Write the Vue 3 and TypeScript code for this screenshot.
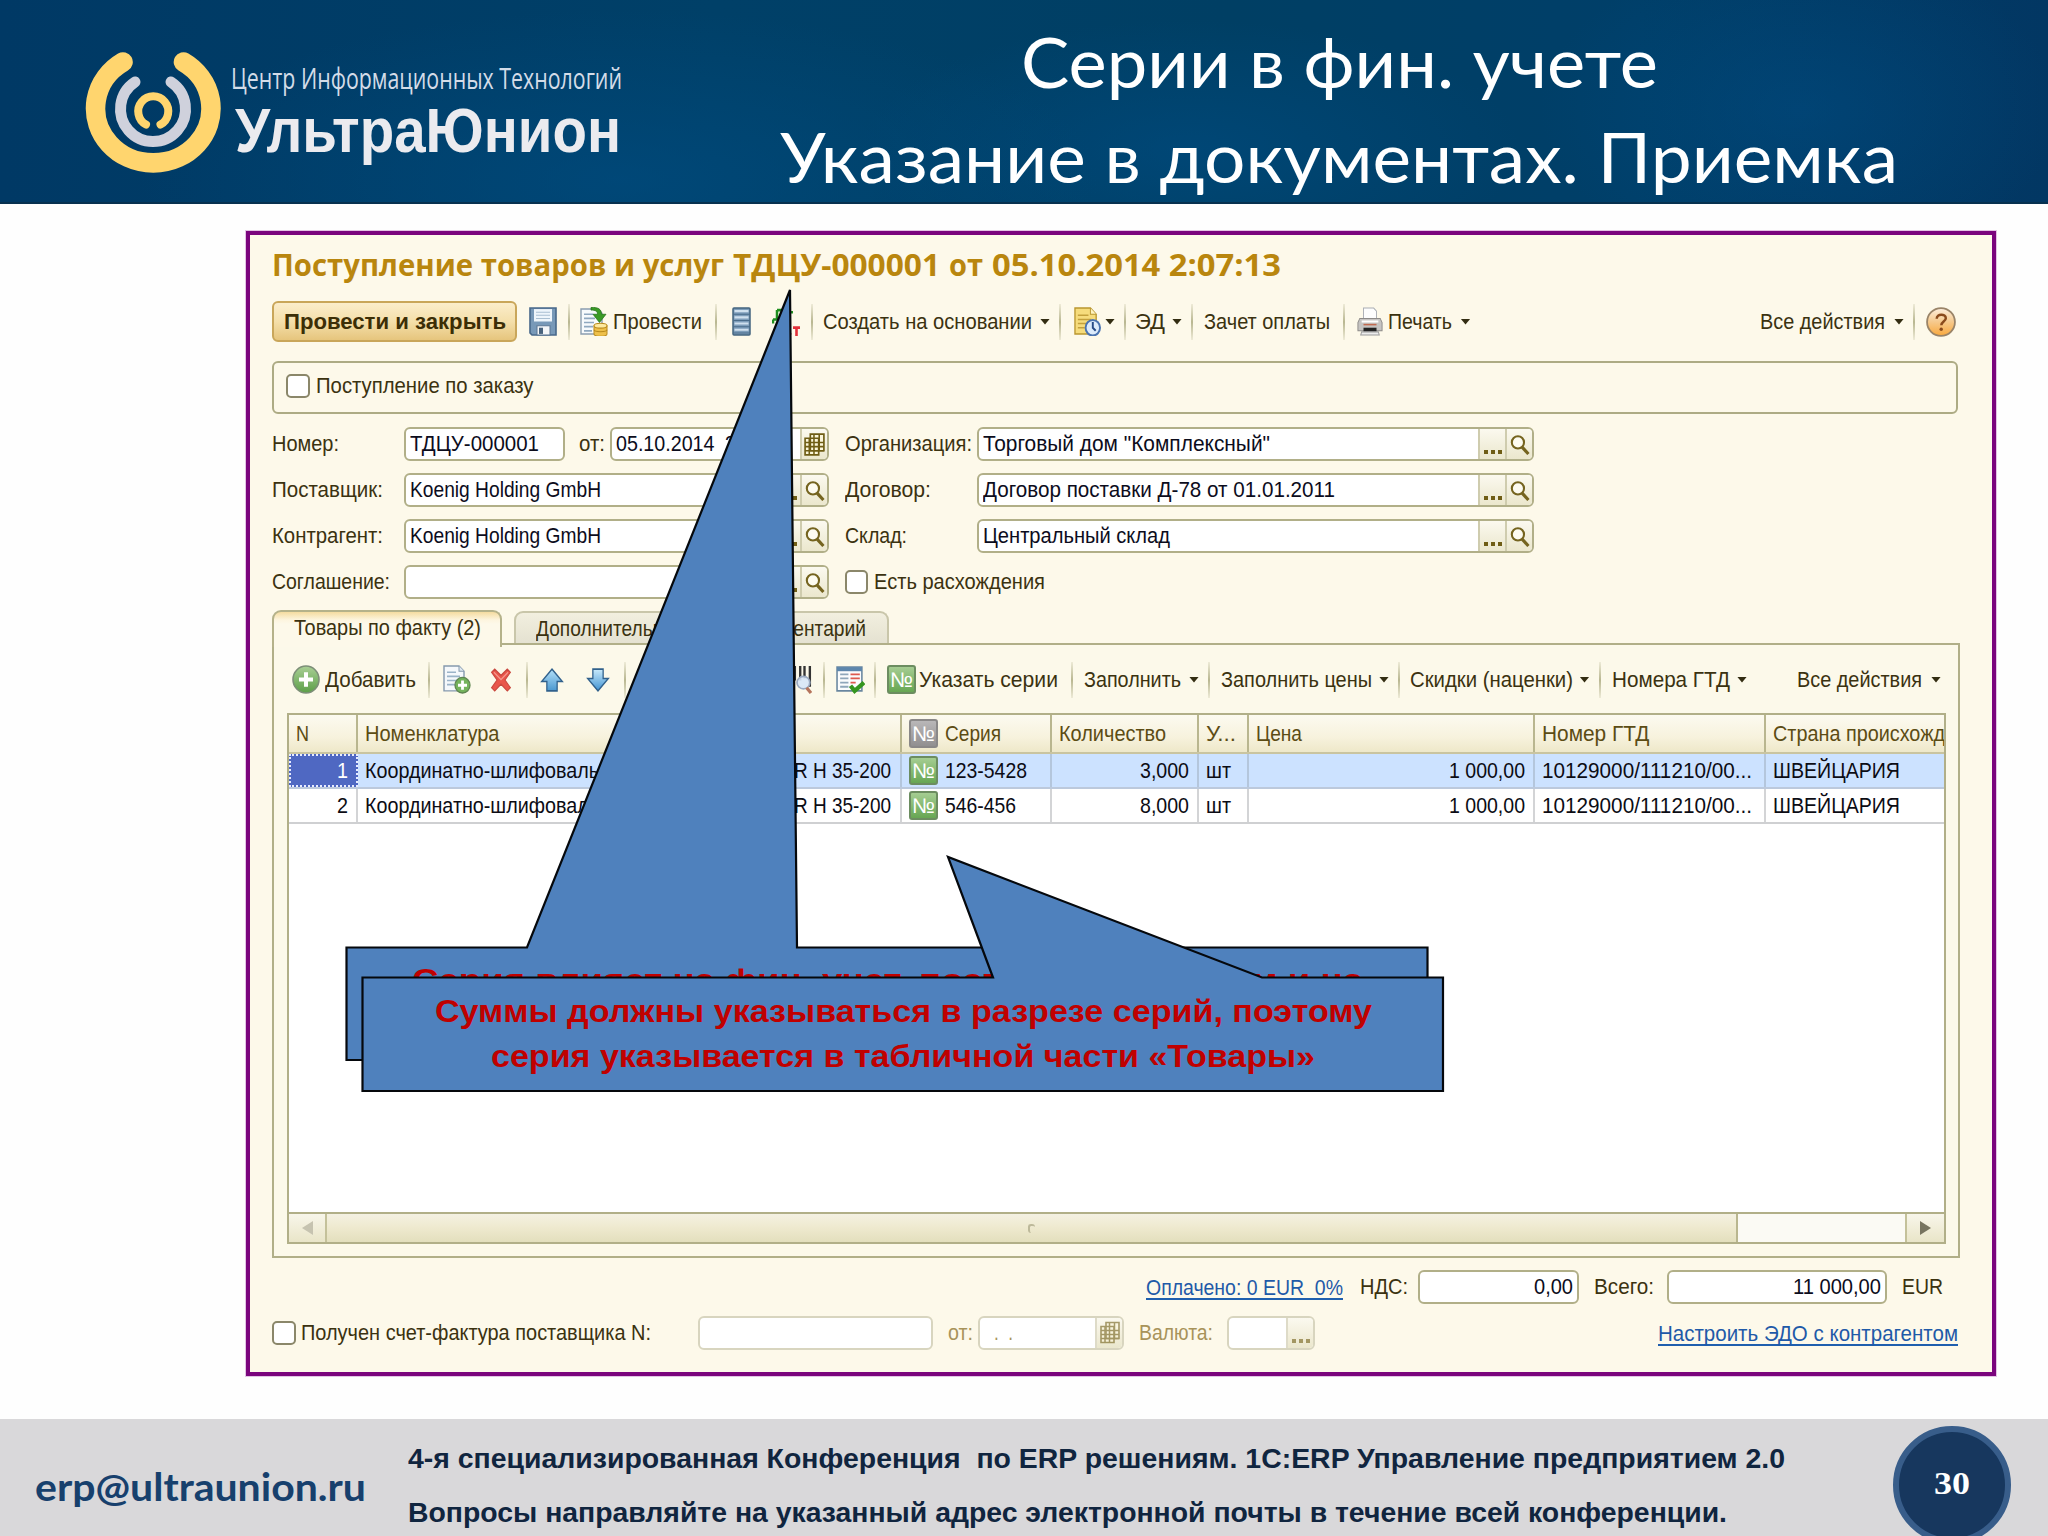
<script setup lang="ts">
import type { Directive } from 'vue'

// Stretches or condenses a single line of text to the given width.
const vFit: Directive<HTMLElement, number> = {
  mounted(el, binding) {
    const natural = el.getBoundingClientRect().width
    el.style.width = `${binding.value}px`
    el.style.transform = `scaleX(${binding.value / natural})`
  },
}

interface Item {
  k: 'text' | 'icon' | 'sep' | 'arrow'
  ml: number
  t?: string
  w?: number
}

const text = (t: string, w: number, ml = 11): Item => ({ k: 'text', t, w, ml })
const icon = (t: string, w: number, ml = 11): Item => ({ k: 'icon', t, w, ml })
const sep = (ml = 12): Item => ({ k: 'sep', ml })
const arrow = (ml = 8): Item => ({ k: 'arrow', ml })

const mainBar: Item[] = [
  icon('save', 28, 11.5), sep(11),
  icon('post', 28, 10.5), text('Провести', 89, 5), sep(12.5),
  icon('list', 19, 15.5), icon('dtkt', 28, 21), sep(11),
  text('Создать на основании', 209, 10), arrow(8), sep(9),
  icon('docclock', 27, 13), arrow(4), sep(9),
  text('ЭД', 30, 9), arrow(7), sep(9),
  text('Зачет оплаты', 126, 11), sep(12.5),
  icon('print', 26, 12.5), text('Печать', 64, 4.5), arrow(9),
]

const goodsBar: Item[] = [
  icon('add', 28, 0), text('Добавить', 91, 5), sep(12),
  icon('copy', 28, 13), icon('del', 22, 18.5), sep(14),
  icon('up', 24, 12.5), icon('down', 24, 21.5), sep(14),
  icon('barcode', 30, 156), sep(11),
  icon('check', 29, 11), sep(9.5),
  icon('num', 29, 11), text('Указать серии', 139, 3), sep(12.5),
  text('Заполнить', 97), arrow(8.5), sep(9),
  text('Заполнить цены', 151, 10.5), arrow(7.5), sep(9),
  text('Скидки (наценки)', 163, 9.5), arrow(7), sep(9),
  text('Номера ГТД', 118, 11), arrow(7.5),
]

const pic: Record<string, string> = {
  save: '<path d="M1 1h26v26H3l-2-2z" fill="#7899b8" stroke="#48688a" stroke-width="1.6"/><path d="M5 2h18v12H5z" fill="#eef5fb"/><path d="M7 5h14M7 8h14M7 11h14" stroke="#a9bfd2"/><path d="M8 18h13v9H8z" fill="#f4f6f8" stroke="#587592"/><path d="M10 20h4v6h-4z" fill="#49637d"/>',
  post: '<path d="M1 2h17l4 4v20H1z" fill="#f7fafc" stroke="#8a9db0" stroke-width="1.4"/><path d="M4 7h9M4 11h11M4 15h10M4 19h9M4 23h8" stroke="#8fa8bf" stroke-width="1.6"/><path d="M11 .5c7-.5 10.500 1.500 10.500 6.500H26l-6.500 8L13 7h4.500c0-3-2-4-6.500-4z" fill="#3a9b25" stroke="#1f6e14" stroke-width=".7"/><path d="M14 18v8c0 3 13 3 13 0v-8z" fill="#eec04a" stroke="#b98a1c"/><ellipse cx="20.5" cy="18" rx="6.5" ry="2.4" fill="#fde9a0" stroke="#b98a1c"/><path d="M14 22c0 2.500 13 2.500 13 0" fill="none" stroke="#b98a1c"/>',
  list: '<rect x="1" y="1" width="17" height="26" rx="1" fill="#7d9dba" stroke="#43647f" stroke-width="1.500"/><path d="M2.500 4h14M2.500 10h14M2.500 16h14M2.500 22h14" stroke="#cfe0ee" stroke-width="2"/><path d="M1 7h17M1 13h17M1 19h17M1 25h17" stroke="#4a6c8a"/>',
  dtkt: '<path d="M5 3h8v8M5 3v8M1 12h14M1 12v4" stroke="#1f8f1f" stroke-width="2.500" fill="none"/><path d="M13 5h8M17 5v5" stroke="#1f8f1f" stroke-width="2.500"/><path d="M12 18v9M18 17l-6 5 7 5M21 20h7M24.500 20v8" stroke="#e2303a" stroke-width="2.600" fill="none"/>',
  docclock: '<path d="M1 1h16l6 6v19H1z" fill="#f6dc7c" stroke="#b9962f" stroke-width="1.400"/><path d="M17 1v6h6" fill="#fff3bf" stroke="#b9962f"/><path d="M4 8h11M4 12h14M4 16h9M4 20h7" stroke="#c4a13c" stroke-width="1.400"/><circle cx="19.500" cy="20" r="7.500" fill="#dcebfb" stroke="#4a73b0" stroke-width="2"/><path d="M19.500 14.500V20l3 3" stroke="#274b86" stroke-width="2" fill="none"/>',
  print: '<path d="M7 1h11l3 3v9H7z" fill="#fdfdfd" stroke="#a9adb3"/><path d="M3 11h22l2 4v8H1v-8z" fill="#c6c4c2" stroke="#8c8a88"/><path d="M5 14h18" stroke="#fff" stroke-width="2"/><path d="M7 17h14" stroke="#c26a50" stroke-width="1.500"/><path d="M7 20h14v4H7z" fill="#222"/><path d="M5 24h18l1 3H4z" fill="#ececec" stroke="#9a9a9a"/>',
  help: '<defs><linearGradient id="hg" x1="0" y1="0" x2="0" y2="1"><stop offset="0" stop-color="#fdeedd"/><stop offset=".5" stop-color="#f6c98c"/><stop offset="1" stop-color="#f9a83c"/></linearGradient></defs><circle cx="14" cy="14" r="13" fill="url(#hg)" stroke="#9a8468" stroke-width="1.700"/><path d="M10 11c0-5 8.500-5 8.500-.5 0 3-4.200 3.200-4.200 6.500" fill="none" stroke="#8a4a1c" stroke-width="2.300"/><circle cx="14.200" cy="20.800" r="1.600" fill="#8a4a1c"/>',
  add: '<defs><linearGradient id="ag" x1="0" y1="0" x2="0" y2="1"><stop offset="0" stop-color="#a9cf95"/><stop offset="1" stop-color="#5c9f48"/></linearGradient></defs><circle cx="14" cy="14" r="13" fill="url(#ag)" stroke="#7d8f78" stroke-width="1.600"/><path d="M14 7v14M7 14h14" stroke="#fff" stroke-width="4"/>',
  copy: '<path d="M1 1h15l5 5v19H1z" fill="#f5f8fb" stroke="#8599ad" stroke-width="1.400"/><path d="M16 1v5h5" fill="#dfe8f0" stroke="#8599ad"/><path d="M4 7h9M4 11h13M4 15h10M4 19h8" stroke="#9bb3c8" stroke-width="1.600"/><circle cx="19.500" cy="19.500" r="7.500" fill="#74b35c" stroke="#5f8551" stroke-width="1.300"/><path d="M19.500 15v9M15 19.500h9" stroke="#fff" stroke-width="2.800"/>',
  del: '<path d="M2 7l4-3 8 6 8-6 4 3-7 7.500 7 7.500-4 3-8-6.500L6 25l-4-3 7-7.500z" fill="#e9564b" stroke="#c9483f" stroke-width="1.200"/><path d="M5 7l9 7 9-7" stroke="#f59a8e" stroke-width="1.500" fill="none"/>',
  up: '<defs><linearGradient id="ug" x1="0" y1="0" x2="0" y2="1"><stop offset="0" stop-color="#b6e2fa"/><stop offset="1" stop-color="#4a97cf"/></linearGradient></defs><path d="M14 4l12 12h-6v9H8v-9H2z" fill="url(#ug)" stroke="#31618c" stroke-width="1.500"/>',
  down: '<defs><linearGradient id="dg" x1="0" y1="0" x2="0" y2="1"><stop offset="0" stop-color="#c9eafb"/><stop offset="1" stop-color="#3f92d2"/></linearGradient></defs><path d="M14 25L2 13h6V4h12v9h6z" fill="url(#dg)" stroke="#31618c" stroke-width="1.500"/>',
  barcode: '<path d="M2 1v20M6 1v20M12 1v14M17 1v14M21 1v12M26 1v20" stroke="#333" stroke-width="2.200"/><circle cx="20" cy="17" r="6" fill="#d7e6f7" fill-opacity=".9" stroke="#9aa9c0" stroke-width="1.600"/><path d="M23 22l4 5" stroke="#b5745c" stroke-width="3"/>',
  check: '<path d="M1 2h24v23H1z" fill="#fbfcfd" stroke="#69869f" stroke-width="1.500"/><path d="M1 2h24v4H1z" fill="#5d86ac"/><path d="M4 9h8M4 13h8M4 17h8M4 21h8" stroke="#8fa6ba" stroke-width="1.700"/><path d="M14 9h9M14 13h9M14 17h5" stroke="#dd5a4f" stroke-width="1.700"/><path d="M14 20l4 5 9-8" fill="none" stroke="#35951f" stroke-width="4"/>',
  mag: '<circle cx="8.500" cy="8" r="5.800" fill="#fdfbf0" stroke="#75641f" stroke-width="2"/><path d="M12.500 12.500l6 6.500" stroke="#75641f" stroke-width="3"/>',
  cal: '<path d="M6 1h13v16H6z M1 5h13v16H1z" fill="#fbf6da" stroke="#6f5d15" stroke-width="1.600"/><path d="M1 9h18M1 13h18M1 17h18M5 5v16M9.500 1v20M14.500 1v16" stroke="#6f5d15" stroke-width="1.500"/>',
}

interface Column { title: string; w: number; tw: number; num?: boolean }
const columns: Column[] = [
  { title: 'N', w: 69, tw: 13 },
  { title: 'Номенклатура', w: 543.5, tw: 134.5 },
  { title: 'Серия', w: 150.5, tw: 56, num: true },
  { title: 'Количество', w: 147, tw: 107 },
  { title: 'У...', w: 49.5, tw: 30 },
  { title: 'Цена', w: 286, tw: 46 },
  { title: 'Номер ГТД', w: 231, tw: 107.5 },
  { title: 'Страна происхожд', w: 180, tw: 172 },
]
const rows = [
  { n: '1', serie: '123-5428', sw: 82, qty: '3,000' },
  { n: '2', serie: '546-456', sw: 71, qty: '8,000' },
]

const left = [
  { label: 'Поставщик:', lw: 111, value: 'Koenig Holding GmbH', vw: 191 },
  { label: 'Контрагент:', lw: 111, value: 'Koenig Holding GmbH', vw: 191 },
  { label: 'Соглашение:', lw: 118, value: '', vw: 0 },
]
const right = [
  { label: 'Организация:', lw: 127, value: 'Торговый дом "Комплексный"', vw: 287 },
  { label: 'Договор:', lw: 86, value: 'Договор поставки Д-78 от 01.01.2011', vw: 352 },
  { label: 'Склад:', lw: 62, value: 'Центральный склад', vw: 187 },
]
</script>

<template>
  <div class="slide">
    <header class="head">
      <div class="logo">
        <svg class="emblem" width="140" height="126" viewBox="84 50 140 126" fill="none" stroke-linecap="round">
          <path d="M123 62A57.700 54.500 0 1 0 183.500 62" stroke="#ffd56e" stroke-width="19.600" />
          <path d="M135 82A32.500 32.500 0 1 0 171 82" stroke="#cfd1dc" stroke-width="11" />
          <path d="M146 124.500A15 15 0 1 1 160.500 124.500" stroke="#ffd56e" stroke-width="8" />
        </svg>
        <div class="brand">
          <div class="l1"><span v-fit="391" class="t">Центр Информационных Технологий</span></div>
          <div class="l2"><span v-fit="386" class="t">УльтраЮнион</span></div>
        </div>
      </div>
      <h1 class="title">
        <span v-fit="637" class="t">Серии в фин. учете</span>
        <span v-fit="1118" class="t">Указание в документах. Приемка</span>
      </h1>
    </header>

    <main class="form">
      <div class="form-title">
        <span v-fit="452" class="t">Поступление товаров и услуг</span>
        <span v-fit="207" class="t">ТДЦУ-000001</span>
        <span v-fit="34" class="t">от</span>
        <span v-fit="289" class="t">05.10.2014 2:07:13</span>
      </div>

      <div class="bar main-bar">
        <div class="primary"><span v-fit="222" class="t">Провести и закрыть</span></div>
        <template v-for="(it, i) in mainBar" :key="i">
          <span v-if="it.k === 'text'" class="slot" :style="{ marginLeft: it.ml + 'px' }"><span v-fit="it.w!" class="t">{{ it.t }}</span></span>
          <svg v-else-if="it.k === 'icon'" :width="it.w" height="29" :viewBox="it.t === 'list' ? '0 0 19 28' : '0 0 28 28'" preserveAspectRatio="none" :style="{ marginLeft: it.ml + 'px' }" v-html="pic[it.t!]" />
          <i v-else :class="it.k" :style="{ marginLeft: it.ml + 'px' }"></i>
        </template>
        <span class="slot push"><span v-fit="125" class="t">Все действия</span></span>
        <i class="arrow a8"></i><i class="sep a8"></i>
        <svg class="a11" width="30" height="30" viewBox="0 0 28 28" v-html="pic.help" />
      </div>

      <div class="order">
        <i class="box"></i><span v-fit="217.5" class="t">Поступление по заказу</span>
      </div>

      <div class="fields">
        <div class="col">
          <div class="row">
            <div class="lab"><span v-fit="67" class="t">Номер:</span></div>
            <div class="inp num-inp"><span v-fit="129" class="t">ТДЦУ-000001</span></div>
            <span class="slot from"><span v-fit="26" class="t">от:</span></span>
            <div class="inp grow"><span v-fit="98.500" class="t">05.10.2014</span><span v-fit="60" class="t time">2:07:13</span>
              <div class="btn last"><svg width="21" height="23" viewBox="0 0 20 22" v-html="pic.cal" /></div></div>
          </div>
          <div v-for="f in left" :key="f.label" class="row">
            <div class="lab"><span v-fit="f.lw" class="t">{{ f.label }}</span></div>
            <div class="inp grow"><span v-if="f.value" v-fit="f.vw" class="t">{{ f.value }}</span>
              <div class="btn dots push"><b></b><b></b><b></b></div>
              <div class="btn"><svg width="21" height="21" viewBox="0 0 20 20" v-html="pic.mag" /></div></div>
          </div>
        </div>
        <div class="col right">
          <div v-for="f in right" :key="f.label" class="row">
            <div class="lab"><span v-fit="f.lw" class="t">{{ f.label }}</span></div>
            <div class="inp grow"><span v-fit="f.vw" class="t">{{ f.value }}</span>
              <div class="btn dots push"><b></b><b></b><b></b></div>
              <div class="btn"><svg width="21" height="21" viewBox="0 0 20 20" v-html="pic.mag" /></div></div>
          </div>
          <div class="row"><i class="box"></i><span v-fit="171" class="t diff">Есть расхождения</span></div>
        </div>
      </div>

      <div class="tabs">
        <div class="tab on"><span v-fit="187" class="t">Товары по факту (2)</span></div>
        <div class="tab off"><span v-fit="138" class="t">Дополнительно</span></div>
        <div class="tab off second"><span v-fit="121" class="t">Комментарий</span></div>
      </div>

      <section class="sheet">
        <div class="bar goods-bar">
          <template v-for="(it, i) in goodsBar" :key="i">
            <span v-if="it.k === 'text'" class="slot" :style="{ marginLeft: it.ml + 'px' }"><span v-fit="it.w!" class="t">{{ it.t }}</span></span>
            <span v-else-if="it.t === 'num'" class="no" :style="{ marginLeft: it.ml + 'px' }"><span v-fit="23" class="t">№</span></span>
            <svg v-else-if="it.k === 'icon'" :width="it.w" height="29" viewBox="0 0 28 28" preserveAspectRatio="none" :style="{ marginLeft: it.ml + 'px' }" v-html="pic[it.t!]" />
            <i v-else :class="it.k" :style="{ marginLeft: it.ml + 'px' }"></i>
          </template>
          <span class="slot push"><span v-fit="125" class="t">Все действия</span></span>
          <i class="arrow a8"></i>
        </div>

        <div class="table">
          <div class="tr th">
            <div v-for="c in columns" :key="c.title" class="td" :style="{ width: c.w + 'px' }">
              <span v-if="c.num" class="no gray"><span v-fit="23" class="t">№</span></span>
              <span v-fit="c.tw" class="t">{{ c.title }}</span>
            </div>
          </div>
          <div v-for="(r, i) in rows" :key="r.n" class="tr" :class="{ sel: i === 0 }">
            <div class="td end first" :style="{ width: columns[0].w + 'px' }"><span v-fit="11" class="t">{{ r.n }}</span></div>
            <div class="td" :style="{ width: columns[1].w + 'px' }">
              <span v-fit="270" class="t">Координатно-шлифовальный</span><span v-fit="97" class="t push">R H 35-200</span>
            </div>
            <div class="td" :style="{ width: columns[2].w + 'px' }"><span class="no"><span v-fit="23" class="t">№</span></span><span v-fit="r.sw" class="t">{{ r.serie }}</span></div>
            <div class="td end" :style="{ width: columns[3].w + 'px' }"><span v-fit="49" class="t">{{ r.qty }}</span></div>
            <div class="td" :style="{ width: columns[4].w + 'px' }"><span v-fit="25" class="t">шт</span></div>
            <div class="td end" :style="{ width: columns[5].w + 'px' }"><span v-fit="76" class="t">1 000,00</span></div>
            <div class="td" :style="{ width: columns[6].w + 'px' }"><span v-fit="210" class="t">10129000/111210/00...</span></div>
            <div class="td" :style="{ width: columns[7].w + 'px' }"><span v-fit="127" class="t">ШВЕЙЦАРИЯ</span></div>
          </div>
          <div class="scroll">
            <div class="sb"><i class="tri l"></i></div>
            <div class="thumb"><i></i></div>
            <div class="track"></div>
            <div class="sb r"><i class="tri"></i></div>
          </div>
        </div>
      </section>

      <div class="foot totals">
        <a class="link"><span v-fit="197" class="t">{{ 'Оплачено: 0 EUR  0%' }}</span></a>
        <span v-fit="48" class="t m17">НДС:</span>
        <div class="inp end vat"><span v-fit="39" class="t">0,00</span></div>
        <span v-fit="60" class="t m15">Всего:</span>
        <div class="inp end sum"><span v-fit="88" class="t">11 000,00</span></div>
        <span v-fit="41" class="t m15">EUR</span>
      </div>
      <div class="foot invoice">
        <i class="box"></i><span v-fit="350" class="t m5">Получен счет-фактура поставщика N:</span>
        <div class="inp dis inv-no"></div>
        <span v-fit="25" class="t pale m15">от:</span>
        <div class="inp dis inv-date"><span v-fit="19" class="t pale m10">{{ '.  .' }}</span><div class="btn last"><svg width="20" height="23" viewBox="0 0 20 22" v-html="pic.cal" /></div></div>
        <span v-fit="74" class="t pale m15">Валюта:</span>
        <div class="inp dis cur"><div class="btn dots push"><b></b><b></b><b></b></div></div>
        <a class="link push"><span v-fit="300" class="t">Настроить ЭДО с контрагентом</span></a>
      </div>
    </main>

    <footer class="bottom">
      <div class="mail"><span v-fit="331" class="t">erp@ultraunion.ru</span></div>
      <div class="notes">
        <span v-fit="1377" class="t">{{ '4-я специализированная Конференция  по ERP решениям. 1С:ERP Управление предприятием 2.0' }}</span>
        <span v-fit="1319" class="t">Вопросы направляйте на указанный адрес электронной почты в течение всей конференции.</span>
      </div>
      <div class="page"><span v-fit="36" class="t">30</span></div>
    </footer>

    <div class="call one">
      <svg width="1090" height="780" viewBox="342 285 1090 780"><path d="M346.500 947.500H527L790 290L797 947.500H1427.500V1060H346.500Z" /></svg>
      <div class="msg"><span v-fit="951" class="t">Серия влияет на фин. учет, поэтому указываем и на</span></div>
    </div>
    <div class="call two">
      <svg width="1090" height="245" viewBox="358 850 1090 245"><path d="M362.500 977.500H993L948 857L1262 977.500H1443V1091H362.500Z" /></svg>
      <div class="msg">
        <span v-fit="937" class="t">Суммы должны указываться в разрезе серий, поэтому</span>
        <span v-fit="824" class="t">серия указывается в табличной части «Товары»</span>
      </div>
    </div>
  </div>
</template>

<style>
html, body { margin: 0; }
</style>

<style scoped>
.slide { position: relative; width: 2048px; height: 1536px; overflow: hidden; background: #fefefe; display: flex; flex-direction: column; font: 22px/26px "Liberation Sans", Arial, sans-serif; color: #3b3210; }
.slide * { box-sizing: border-box; }
.t { display: inline-block; flex: none; white-space: pre; transform-origin: 0 50%; }
.slot { flex: none; display: flex; }
.push { margin-left: auto !important; }
svg { flex: none; display: block; }

.head { height: 204px; flex: none; display: flex; border-bottom: 2px solid #07314f; background:
  radial-gradient(ellipse 480px 170px at 620px 180px, rgba(0, 76, 128, .65), transparent),
  radial-gradient(ellipse 330px 130px at 1190px 150px, rgba(0, 76, 130, .6), transparent),
  radial-gradient(ellipse 260px 160px at 1800px 110px, rgba(0, 78, 134, .45), transparent),
  linear-gradient(90deg, #003965, #004068 35%, #003f64 60%, #003f69 80%, #023763); }
.logo { width: 780px; padding: 50px 0 0 84px; display: flex; }
.brand { padding-top: 10px; margin-left: 7px; }
.l1 { height: 40px; font: 400 30px/35px "Open Sans", "Noto Sans", sans-serif; color: #d3dce8; }
.l2 { margin-left: 4px; font: bold 63px/61px "Liberation Sans", sans-serif; color: #ebebef; }
.title { margin: 0; width: 1118px; display: flex; flex-direction: column; align-items: center; font: 400 70px/95px Lato, Carlito, sans-serif; color: #fff; padding-top: 14px; }

.form { width: 1750px; height: 1145px; margin: 27px 0 0 246px; flex: none; border: 4px solid #7b057d; outline: 1px solid #e3c4e4; background: #fdf9ea; padding: 0 32px 0 22px; display: flex; flex-direction: column; }
.form-title { height: 66px; display: flex; gap: 9px; line-height: 60px; flex: none; font-family: "Open Sans", "Noto Sans", sans-serif; font-size: 30px; font-weight: 700; color: #b9860e; }
.bar { display: flex; align-items: center; flex: none; }
.main-bar { height: 41px; padding-right: 4px; }
.primary { width: 245px; height: 41px; padding-left: 10px; flex: none; display: flex; align-items: center; border: 2px solid #c9a65a; border-radius: 6px; background: linear-gradient(#fbedcb, #f4dfaa 50%, #e6c57d); font-weight: bold; color: #3c2e06; }
.sep { flex: none; width: 2px; height: 36px; background: linear-gradient(rgba(180, 178, 140, .2), #b9b791 50%, rgba(180, 178, 140, .2)); }
.arrow { flex: none; width: 10px; height: 6px; background: #332d12; clip-path: polygon(0 0, 100% 0, 50% 100%); }
.a8 { margin-left: 9px; }
.a11 { margin-left: 11px; }
.order { height: 53px; margin-top: 19px; padding-left: 12px; flex: none; display: flex; align-items: center; border: 2px solid #adab84; border-radius: 6px; width: 1686px; padding-bottom: 4px; }
.order .t { margin-left: 6px; }
.box { flex: none; width: 24px; height: 24px; border: 2px solid #8b876a; border-radius: 5px; background: #fff; }

.fields { display: flex; margin-top: 13px; flex: none; }
.col { width: 557px; display: flex; flex-direction: column; gap: 12px; }
.col.right { width: 689.500px; margin-left: 15.500px; }
.row { height: 34px; display: flex; align-items: center; }
.lab { width: 132px; flex: none; display: flex; }
.inp { height: 34px; flex: none; border: 2px solid #b1af88; border-radius: 6px; background: #fff; display: flex; align-items: center; padding-left: 4px; color: #0c0c1c; overflow: hidden; }
.inp.grow { flex: 1; }
.inp.end { justify-content: flex-end; padding-right: 4px; }
.num-inp { width: 161px; }
.from { margin: 0 5px 0 14px; }
.time { margin-left: 10px; }
.btn { width: 27px; height: 100%; flex: none; display: flex; align-items: center; justify-content: center; border-left: 2px solid #cfccae; background: linear-gradient(#fbf9ef, #ebe7cd); }
.btn.last { margin-left: auto; }
.dots { gap: 3px; align-items: flex-end; padding-bottom: 5px; }
.dots b { width: 4px; height: 4px; background: #6f5d15; }
.diff { margin-left: 6px; }
.right .box { width: 23px; }

.tabs { height: 35px; margin-top: 11px; display: flex; align-items: flex-end; flex: none; }
.tab { height: 34px; border: 2px solid #b5b28a; border-bottom: 0; border-radius: 9px 9px 0 0; display: flex; align-items: center; padding: 0 0 1px 20px; }
.tab.on { width: 230px; height: 37px; margin-bottom: -2px; padding-bottom: 3px; position: relative; z-index: 1; background: linear-gradient(#f5dca0, #fdf5df 8px, #fdf9ea 12px); }
.tab.off { width: 202px; margin-left: 12px; background: linear-gradient(#f2efdf, #e4e1d0); border-color: #c9c6aa; }
.tab.second { width: 163px; margin-left: 10px; padding-left: 17px; }
.sheet { width: 1688px; height: 615px; margin-top: -2px; flex: none; border: 2px solid #b1af88; padding-left: 13px; background: #fcf9ea; }
.goods-bar { height: 68px; padding: 1px 17px 0 5px; }
.no { flex: none; width: 29px; height: 29px; border: 2px solid #6c8d60; border-radius: 3px; background: linear-gradient(#a5cd92, #67a653); display: flex; align-items: center; justify-content: center; color: #fff; font: 400 21px/24px "Liberation Sans", sans-serif; }
.no.gray { border-color: #8a8888; background: linear-gradient(#b9b7b8, #918f90); }

.table { width: 1659px; height: 531px; border: 2px solid #b1af88; background: #fff; display: flex; flex-direction: column; overflow: hidden; }
.tr { height: 35px; flex: none; display: flex; border-bottom: 2px solid #cfd0d2; color: #0c0c14; }
.th { height: 39px; background: linear-gradient(#fcfaf0, #f7f2dd 60%, #eee8c9); border-color: #c9c4a0; color: #5c4c14; }
.td { flex: none; display: flex; align-items: center; padding: 0 9px 0 7px; border-right: 2px solid #d3d4d6; overflow: hidden; }
.td.first { padding-right: 7px; }
.td .no { margin-right: 7px; }
.th .td { border-color: #b9b68f; }
.td.end { justify-content: flex-end; padding-right: 8px; }
.td:last-child { border-right: 0; padding-right: 0; }
.sel { background: #cce2ff; border-color: #bcc9dc; }
.sel .td { border-color: #b4c6dc; }
.sel .first { background: #4f68c2; color: #fff; outline: 2px dotted #e8ecff; outline-offset: -2px; border-color: #4f68c2; }
.scroll { height: 30px; margin-top: auto; display: flex; flex: none; border-top: 2px solid #b1af88; }
.sb { width: 38px; display: flex; align-items: center; justify-content: center; border-right: 2px solid #c4c19a; background: linear-gradient(#f8f6ea, #e9e5c8); }
.sb.r { border: 0; border-left: 2px solid #c4c19a; flex: 1; }
.tri { width: 11px; height: 14px; background: #77745f; clip-path: polygon(0 0, 100% 50%, 0 100%); }
.tri.l { background: #c6c3b0; transform: scaleX(-1); }
.thumb { width: 1411px; border-right: 2px solid #b9b68f; background: linear-gradient(#f4f1e2, #efead0 45%, #e3dfbd); display: flex; align-items: center; justify-content: center; }
.thumb i { width: 7px; height: 9px; border: solid #bdb99a; border-width: 2px 0 0 2px; border-radius: 3px; }
.track { width: 167px; background: #fbfaf4; }

.foot { display: flex; align-items: center; flex: none; height: 35px; line-height: 28px; }
.foot .inp { line-height: 28px; }
.totals { margin-top: 11px; justify-content: flex-end; padding-right: 17px; }
.invoice { margin-top: 11px; padding-right: 2px; }
.link { flex: none; display: flex; height: 26px; border-bottom: 2px solid #1f5fae; color: #1f5aa8; }
.m17 { margin-left: 17px; }
.m15 { margin-left: 15px; }
.m10 { margin-left: 10px; }
.m5 { margin-left: 5px; }
.vat { width: 161px; margin-left: 10px; }
.sum { width: 220px; margin-left: 13px; }
.inv-no { width: 235px; margin-left: 47px; }
.inv-date { width: 146px; margin-left: 5px; }
.cur { width: 88px; margin-left: 14px; }
.dis { border-color: #d8d5bf; }
.dis .btn { border-color: #dedbc8; }
.dis .btn > * { opacity: .6; }
.pale { color: #a8935a; }

.bottom { height: 117px; margin-top: auto; flex: none; background: #d9d8da; display: flex; }
.mail { width: 407.500px; padding: 39px 0 0 35px; font: bold 39px/56px Lato, Carlito, sans-serif; color: #17406d; }
.notes { width: 1485px; display: flex; flex-direction: column; align-items: flex-start; font: bold 28px/54px "Liberation Sans", sans-serif; color: #10253f; padding-top: 13px; }
.page { width: 118px; height: 118px; margin-top: 7px; border-radius: 50%; border: 6px solid #385d8a; background: #17375e; color: #fff; display: flex; justify-content: center; font: bold 31px/103px "Liberation Serif", serif; flex: none; }

.call { position: absolute; font: bold 32px/45px "Liberation Sans", sans-serif; color: #c00000; }
.call path { fill: #4f81bd; stroke: #05080c; stroke-width: 2.200; }
.one { left: 342px; top: 285px; }
.two { left: 358px; top: 850px; }
.msg { position: absolute; left: 0; width: 1090px; display: flex; flex-direction: column; align-items: center; }
.one .msg { top: 673px; }
.two .msg { top: 138.500px; }
</style>
